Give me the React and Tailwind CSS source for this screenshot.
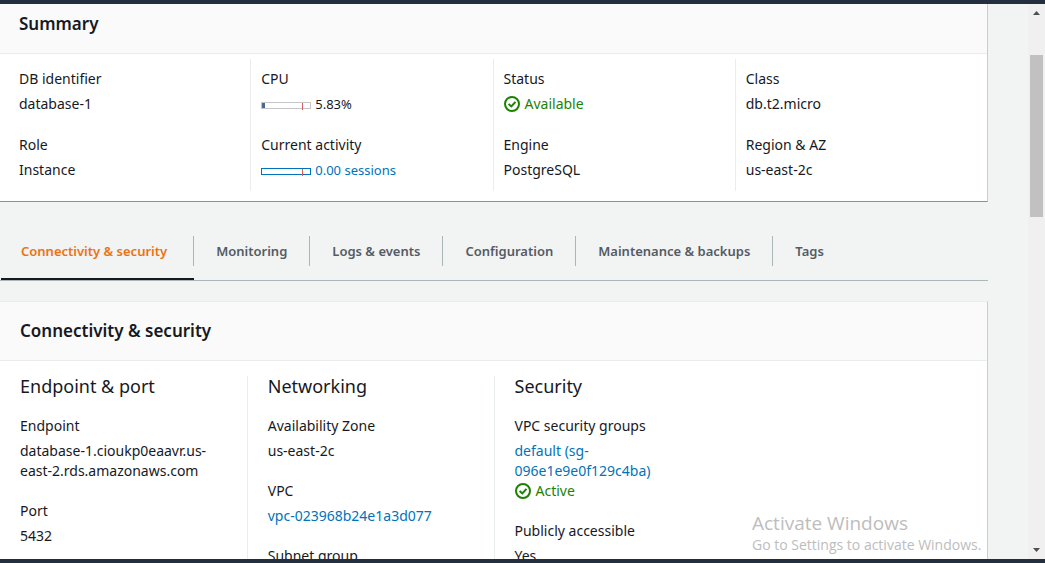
import React from "react";

function CheckIcon() {
  return (
    <svg className="h-4 w-4 shrink-0" viewBox="0 0 16 16" fill="none" stroke="currentColor" strokeWidth="2" aria-hidden="true">
      <circle cx="8" cy="8" r="7" />
      <path d="M4.6 7.9 7.3 10.4 11.5 5.8" />
    </svg>
  );
}

function Status({ children }) {
  return (
    <span className="flex items-center gap-[5px] text-[#1d8102]">
      <CheckIcon />
      {children}
    </span>
  );
}

function UsageBar({ fill = 0, border }) {
  return (
    <svg className="mt-[3px] h-2 w-[50px] shrink-0" viewBox="0 0 50 8" shapeRendering="crispEdges" aria-hidden="true">
      <rect x="0.5" y="0.5" width="49" height="6" fill="#fff" stroke={border} />
      <rect x="1" y="1" width={fill} height="5" fill="#466a94" />
      <rect x="41" y="1" width="1" height="7" fill="#df5b5f" />
    </svg>
  );
}

function Link({ children }) {
  return (
    <a href="#" className="text-[#0073bb] hover:underline">
      {children}
    </a>
  );
}

function Field({ label, children }) {
  return (
    <div className="flex flex-col gap-[5px]">
      <dt>{label}</dt>
      <dd>{children}</dd>
    </div>
  );
}

function SummaryColumn({ first, children }) {
  return (
    <dl className={`flex flex-col gap-[21px] border-l pt-[10px] pb-[11px] pl-[10px] ${first ? "border-transparent" : "border-[#eaeded]"}`}>
      {children}
    </dl>
  );
}

function DetailColumn({ title, first, children }) {
  return (
    <section className={`border-l pr-5 ${first ? "border-transparent pl-[19px]" : "border-[#eaeded] pl-5"}`}>
      <h3 className="text-lg leading-5">{title}</h3>
      <dl className="mt-5 flex flex-col gap-5">{children}</dl>
    </section>
  );
}

const tabs = [
  "Connectivity & security",
  "Monitoring",
  "Logs & events",
  "Configuration",
  "Maintenance & backups",
  "Tags",
];

function Tabs() {
  return (
    <div role="tablist" className="mt-[26px] flex h-[53px] border-b border-[#aab7b8] pl-px text-[13px]">
      {tabs.map((tab, i) => (
        <button
          key={tab}
          type="button"
          role="tab"
          aria-selected={i === 0}
          className={`flex flex-col border-b-2 pt-2 font-semibold ${i === 0 ? "border-[#16191f] text-[#ec7211]" : "border-transparent text-[#545b64]"}`}
        >
          <span className={`flex h-[30px] items-center whitespace-nowrap ${i === 0 ? "pr-[26px] pl-5" : "px-[22px]"} ${i === tabs.length - 1 ? "" : "border-r border-[#aab7b8]"}`}>
            {tab}
          </span>
        </button>
      ))}
    </div>
  );
}

function Scrollbar() {
  return (
    <div className="flex w-[17px] shrink-0 flex-col items-center bg-[#f0f0f0]">
      <button type="button" aria-label="Scroll up" className="flex h-[18px] w-full items-center justify-center">
        <svg className="h-1 w-[7px]" viewBox="0 0 7 4" fill="#505050"><path d="M3.5 0 7 4H0Z" /></svg>
      </button>
      <div className="flex w-full flex-1 flex-col px-[2px] pt-[33px]">
        <div className="h-[162px] bg-[#c1c1c1]" />
      </div>
      <button type="button" aria-label="Scroll down" className="flex h-[18px] w-full items-center justify-center">
        <svg className="h-1 w-[7px]" viewBox="0 0 7 4" fill="#505050"><path d="M0 0H7L3.5 4Z" /></svg>
      </button>
    </div>
  );
}

export default function App() {
  return (
    <div className="relative flex h-screen flex-col overflow-hidden border-y-4 border-[#232f3e] bg-[#f2f3f3] font-['Noto_Sans',sans-serif] text-[14px] leading-5 text-[#16191f]">
      <div className="flex min-h-0 flex-1">
        <main className="min-w-0 flex-1 overflow-hidden pr-10">
          <section className="border-r border-b border-r-[#c8cdcd] border-b-[#879196] bg-white">
            <h2 className="border-b border-[#eaeded] bg-[#fafafa] pt-[10px] pb-[19px] pl-[19px] text-[17px] leading-5 font-semibold">
              Summary
            </h2>
            <div className="grid grid-cols-4 pt-[5px] pr-[10px] pb-[10px] pl-2">
              <SummaryColumn first>
                <Field label="DB identifier">database-1</Field>
                <Field label="Role">Instance</Field>
              </SummaryColumn>
              <SummaryColumn>
                <Field label="CPU">
                  <span className="flex items-center gap-1 text-[13px]">
                    <UsageBar fill={3} border="#c4c6c8" />
                    5.83%
                  </span>
                </Field>
                <Field label="Current activity">
                  <a href="#" className="flex items-center gap-1 text-[13px] text-[#0073bb]">
                    <UsageBar border="#0073bb" />
                    0.00 sessions
                  </a>
                </Field>
              </SummaryColumn>
              <SummaryColumn>
                <Field label="Status"><Status>Available</Status></Field>
                <Field label="Engine">PostgreSQL</Field>
              </SummaryColumn>
              <SummaryColumn>
                <Field label="Class">db.t2.micro</Field>
                <Field label="Region & AZ">us-east-2c</Field>
              </SummaryColumn>
            </div>
          </section>

          <Tabs />

          <section className="mt-5 border-t border-r border-t-[#eaeded] border-r-[#c8cdcd] bg-white">
            <h2 className="border-b border-[#eaeded] bg-[#fafafa] py-[19px] pl-5 text-[17px] leading-5 font-semibold">
              Connectivity &amp; security
            </h2>
            <div className="grid grid-cols-4 pt-[15px] pb-5">
              <DetailColumn title="Endpoint & port" first>
                <Field label="Endpoint">database-1.cioukp0eaavr.us-east-2.rds.amazonaws.com</Field>
                <Field label="Port">5432</Field>
              </DetailColumn>
              <DetailColumn title="Networking">
                <Field label="Availability Zone">us-east-2c</Field>
                <Field label="VPC"><Link>vpc-023968b24e1a3d077</Link></Field>
                <Field label="Subnet group">default</Field>
              </DetailColumn>
              <DetailColumn title="Security">
                <Field label="VPC security groups">
                  <Link>default (sg-096e1e9e0f129c4ba)</Link>
                  <Status>Active</Status>
                </Field>
                <Field label="Publicly accessible">Yes</Field>
              </DetailColumn>
            </div>
          </section>
        </main>
        <Scrollbar />
      </div>

      <div className="pointer-events-none absolute right-[57px] bottom-1 w-[236px] font-['Open_Sans',sans-serif] text-[#bdbdbd]">
        <p className="text-[19px] leading-6">Activate Windows</p>
        <p className="text-sm leading-5">Go to Settings to activate Windows.</p>
      </div>
    </div>
  );
}
